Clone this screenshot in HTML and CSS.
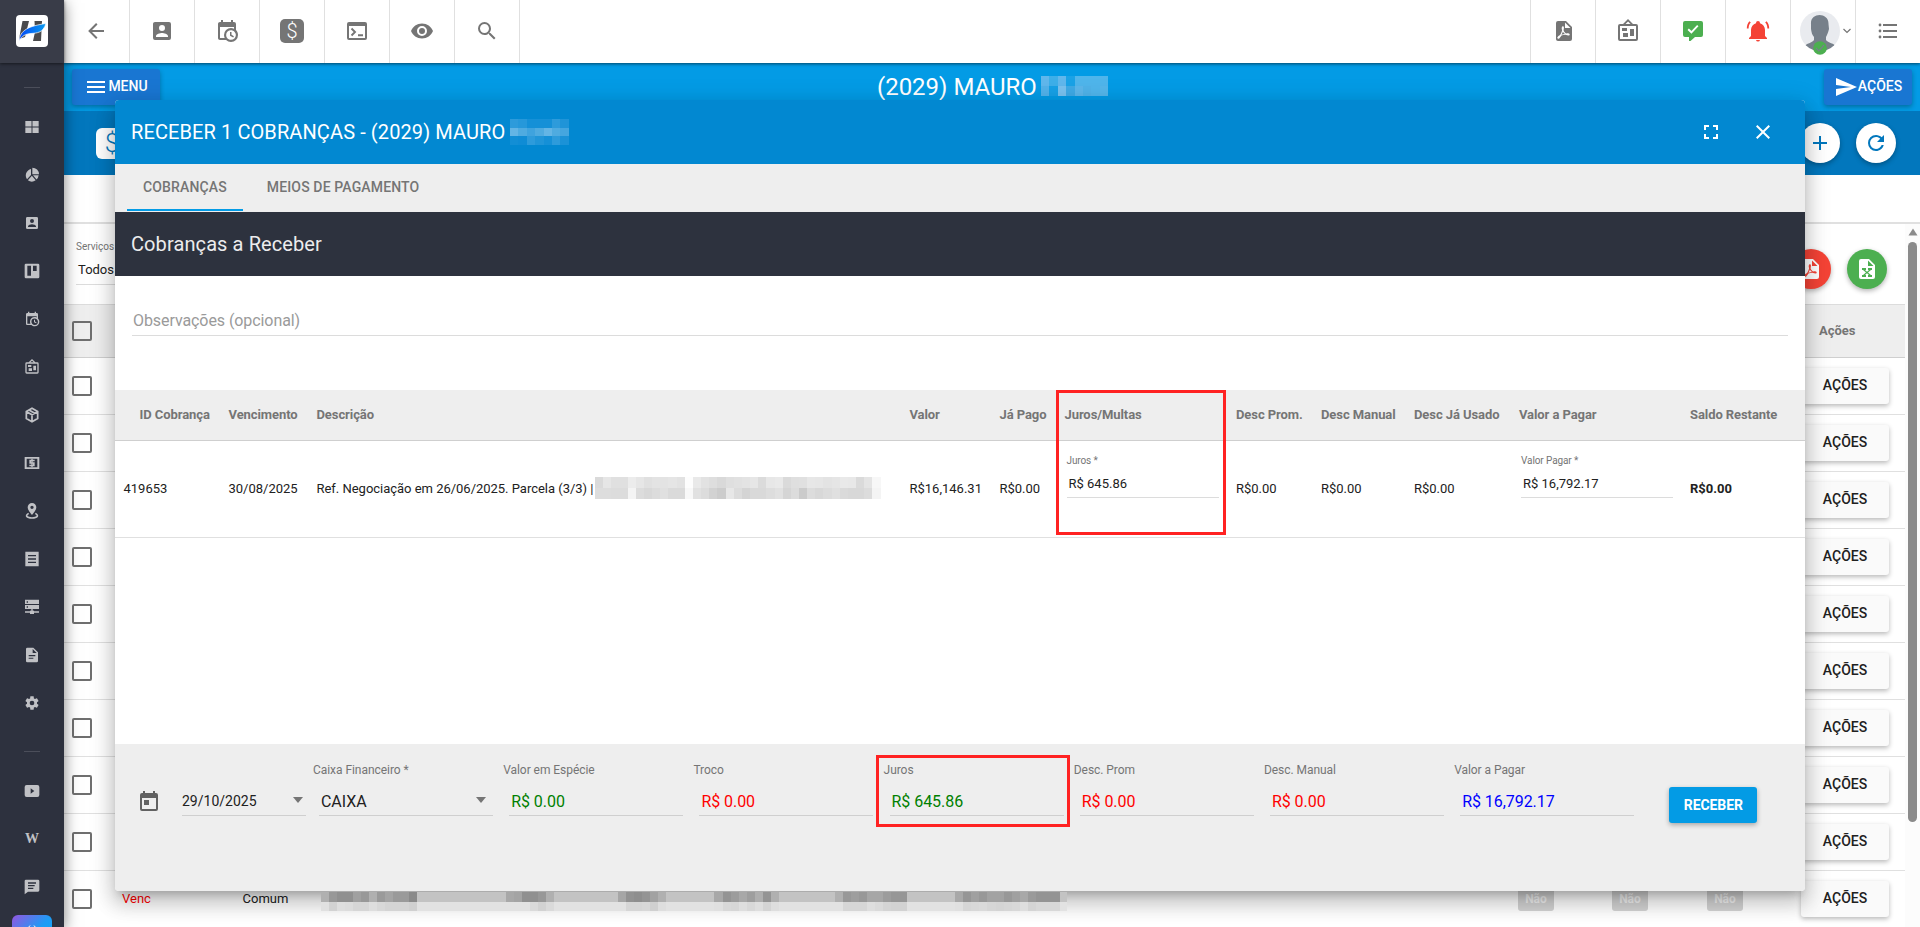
FILE: index.html
```html
<!DOCTYPE html>
<html lang="pt-BR">
<head>
<meta charset="utf-8">
<title>Receber cobranças</title>
<link rel="stylesheet" href="styles.css">
</head>
<body>
<svg class="defs" width="0" height="0">
  <symbol id="i-back" viewBox="0 0 24 24"><path d="M20,11V13H8L13.5,18.5L12.08,19.92L4.16,12L12.08,4.08L13.5,5.5L8,11H20Z"/></symbol>
  <symbol id="i-account" viewBox="0 0 24 24"><path fill-rule="evenodd" d="M6,17C6,15 10,13.9 12,13.9C14,13.9 18,15 18,17V18H6M15,9A3,3 0 0,1 12,12A3,3 0 0,1 9,9A3,3 0 0,1 12,6A3,3 0 0,1 15,9M3,5V19A2,2 0 0,0 5,21H19A2,2 0 0,0 21,19V5A2,2 0 0,0 19,3H5C3.89,3 3,3.9 3,5Z"/></symbol>
  <symbol id="i-calclock" viewBox="0 0 24 24"><path fill-rule="evenodd" d="M15,13H16.5V15.82L18.94,17.23L18.19,18.53L15,16.69V13M19,8H5V19H9.67C9.24,18.09 9,17.07 9,16A7,7 0 0,1 16,9C17.07,9 18.09,9.24 19,9.67V8M5,21C3.89,21 3,20.1 3,19V5C3,3.89 3.89,3 5,3H6V1H8V3H16V1H18V3H19A2,2 0 0,1 21,5V11.1C22.24,12.36 23,14.09 23,16A7,7 0 0,1 16,23C14.09,23 12.36,22.24 11.1,21H5M16,11.15A4.85,4.85 0 0,0 11.15,16C11.15,18.68 13.32,20.85 16,20.85A4.85,4.85 0 0,0 20.85,16C20.85,13.32 18.68,11.15 16,11.15Z"/></symbol>
  <symbol id="i-console" viewBox="0 0 24 24"><path fill-rule="evenodd" d="M4,3H20A2,2 0 0,1 22,5V19A2,2 0 0,1 20,21H4A2,2 0 0,1 2,19V5A2,2 0 0,1 4,3M4,7V19H20V7Z"/><path d="M6.5,9.5L10,13L6.5,16.500M13,16.200H18" fill="none" stroke="currentColor" stroke-width="1.900"/></symbol>
  <symbol id="i-eye" viewBox="0 0 24 24"><path fill-rule="evenodd" d="M12,9A3,3 0 0,0 9,12A3,3 0 0,0 12,15A3,3 0 0,0 15,12A3,3 0 0,0 12,9M12,17A5,5 0 0,1 7,12A5,5 0 0,1 12,7A5,5 0 0,1 17,12A5,5 0 0,1 12,17M12,4.5C7,4.500 2.730,7.610 1,12C2.730,16.390 7,19.500 12,19.500C17,19.500 21.270,16.390 23,12C21.270,7.610 17,4.500 12,4.500Z"/></symbol>
  <symbol id="i-search" viewBox="0 0 24 24"><path d="M9.5,3A6.5,6.5 0 0,1 16,9.5C16,11.11 15.41,12.59 14.44,13.73L14.71,14H15.5L20.5,19L19,20.5L14,15.5V14.71L13.73,14.44C12.59,15.41 11.11,16 9.5,16A6.5,6.5 0 0,1 3,9.5A6.5,6.5 0 0,1 9.5,3M9.5,5C7,5 5,7 5,9.5C5,12 7,14 9.5,14C12,14 14,12 14,9.5C14,7 12,5 9.5,5Z"/></symbol>
  <symbol id="i-pdf" viewBox="0 0 24 24"><path fill-rule="evenodd" d="M13,9H18.5L13,3.5V9M6,2H14L20,8V20A2,2 0 0,1 18,22H6C4.89,22 4,21.1 4,20V4A2,2 0 0,1 6,2M10.93,12.44C11.34,13.34 11.86,14.08 12.46,14.59L12.87,14.91C12,15.07 10.8,15.35 9.53,15.84L9.42,15.88L9.92,14.84C10.37,13.97 10.7,13.18 10.93,12.44M17.41,16.25C17.59,16.07 17.68,15.84 17.69,15.59C17.72,15.39 17.67,15.2 17.57,15.04C17.28,14.57 16.53,14.35 15.29,14.35L14,14.42L13.13,13.84C12.5,13.32 11.93,12.41 11.53,11.28L11.57,11.14C11.9,9.81 12.21,8.2 11.55,7.54C11.39,7.38 11.17,7.3 10.94,7.3H10.7C10.33,7.3 10,7.69 9.91,8.07C9.54,9.4 9.76,10.13 10.13,11.34C9.88,12.23 9.56,13.25 9.05,14.28L8.09,16.08L7.2,16.57C6,17.32 5.43,18.16 5.32,18.69C5.28,18.88 5.3,19.05 5.37,19.23L5.4,19.28L5.88,19.59L6.32,19.7C7.13,19.7 8.05,18.75 9.29,16.63L9.47,16.56C10.5,16.23 11.78,16 13.5,15.81C14.53,16.32 15.74,16.55 16.5,16.55C16.94,16.55 17.24,16.44 17.41,16.25Z"/></symbol>
  <symbol id="i-excel" viewBox="0 0 24 24"><path fill-rule="evenodd" d="M6,2H14L20,8V20A2,2 0 0,1 18,22H6A2,2 0 0,1 4,20V4A2,2 0 0,1 6,2M13,3.5V9H18.500ZM17,11H13V13H14L12,14.670L10,13H11V11H7V13H8L11,15.500L8,18H7V20H11V18H10L12,16.330L14,18H13V20H17V18H16L13,15.500L16,13H17Z"/></symbol>
  <symbol id="i-board" viewBox="0 0 24 24"><path fill-rule="evenodd" d="M12.04,2.5L9.53,5H14.53L12.04,2.5M4,7V20H20V7H4M12,0L17,5H20A2,2 0 0,1 22,7V20A2,2 0 0,1 20,22H4A2,2 0 0,1 2,20V7A2,2 0 0,1 4,5H7L12,0M7,18V14H12V18H7M14,17V10H18V17H14M6,12V9H11V12H6Z"/></symbol>
  <symbol id="i-msgcheck" viewBox="0 0 24 24"><path d="M4,2H20A2,2 0 0,1 22,4V16A2,2 0 0,1 20,18H14L9.500,22H8V18H4A2,2 0 0,1 2,16V4A2,2 0 0,1 4,2Z"/><path d="M7.200,10.200L10.400,13.300L16.800,6.700" fill="none" stroke="#fff" stroke-width="1.900"/></symbol>
  <symbol id="i-bell" viewBox="0 0 24 24"><path d="M21,19V20H3V19L5,17V11C5,7.9 7.03,5.17 10,4.29C10,4.19 10,4.1 10,4A2,2 0 0,1 12,2A2,2 0 0,1 14,4C14,4.1 14,4.19 14,4.29C16.97,5.17 19,7.9 19,11V17L21,19M14,21A2,2 0 0,1 12,22.500A2,2 0 0,1 10,21M20.5,2.200L19.200,3.600C20.900,5.200 21.300,7.500 21.400,9.500H23.200C23.200,6.500 22.400,4.200 20.500,2.200M.8,9.500H2.600C2.700,7.500 3.100,5.200 4.800,3.600L3.500,2.200C1.600,4.200 .8,6.500 .8,9.500Z"/></symbol>
  <symbol id="i-list" viewBox="0 0 24 24"><path d="M7,5H21V7H7ZM7,11H21V13H7ZM7,17H21V19H7Z"/><circle cx="4" cy="6" r="1.400"/><circle cx="4" cy="12" r="1.400"/><circle cx="4" cy="18" r="1.400"/></symbol>
  <symbol id="i-grid" viewBox="0 0 24 24"><path d="M2,3H11.300V11.400H2ZM12.700,3H22V11.400H12.700ZM2,12.600H11.300V21H2ZM12.700,12.600H22V21H12.700Z"/></symbol>
  <symbol id="i-pie" viewBox="0 0 24 24"><path d="M10.500,3V12L4.500,18.500A10,10 0 0,1 10.500,3ZM11.800,13L17.500,20A10,10 0 0,1 5.800,19.800ZM12.500,1A10,10 0 0,1 22.500,11H12.500ZM13.500,12.500H22A10,10 0 0,1 18.800,18.800Z"/></symbol>
  <symbol id="i-trello" viewBox="0 0 24 24"><path fill-rule="evenodd" d="M3,1H21A2,2 0 0,1 23,3V21A2,2 0 0,1 21,23H3A2,2 0 0,1 1,21V3A2,2 0 0,1 3,1M5,4V19H10.500V4ZM13.500,4V12H19V4Z"/></symbol>
  <symbol id="i-box" viewBox="0 0 24 24"><path d="M12,2L20.500,6.800V17.200L12,22L3.500,17.200V6.800ZM3.800,7L12,11.700L20.200,7M12,11.700V22M7.500,4.500L16,9.300" fill="none" stroke="currentColor" stroke-width="2.600"/></symbol>
  <symbol id="i-cash" viewBox="0 0 24 24"><path fill-rule="evenodd" d="M1,3H23V21H1ZM4,5.500V18.500H20V5.500ZM8,7H16V9.500H10.500V11H16V17H8V14.700H13.500V13H8Z"/><path d="M11,5.800H13V18.200H11Z"/></symbol>
  <symbol id="i-pin" viewBox="0 0 24 24"><path fill-rule="evenodd" d="M12,0A6.500,6.500 0 0,1 18.500,6.500C18.500,11 12,18 12,18C12,18 5.500,11 5.500,6.500A6.500,6.500 0 0,1 12,0M12,4A2.500,2.500 0 0,0 12,9A2.500,2.500 0 0,0 12,4"/><path d="M7,15.500C1,19 4,22.500 12,22.500C20,22.500 23,19 17,15.500" fill="none" stroke="currentColor" stroke-width="2.400"/></symbol>
  <symbol id="i-note" viewBox="0 0 24 24"><path fill-rule="evenodd" d="M2,1H22V23H2ZM6,6V8H18V6ZM6,11V13H18V11ZM6,16V18H18V16Z"/></symbol>
  <symbol id="i-server" viewBox="0 0 24 24"><path fill-rule="evenodd" d="M1.500,1H22.500V7.500H1.500ZM4,3.500V5.500H6V3.500ZM1.500,9H22.500V15H1.500ZM4,11V13H6V11ZM11,15H13V18.500H22.500V20.500H1.500V18.500H11Z"/><path d="M9,17.500H15V22.500H9Z"/></symbol>
  <symbol id="i-doc" viewBox="0 0 24 24"><path fill-rule="evenodd" d="M5,1H14L21,8V21A2,2 0 0,1 19,23H5A2,2 0 0,1 3,21V3A2,2 0 0,1 5,1M13,3V9H19ZM7,12V13.800H17V12ZM7,16V17.800H14V16Z"/></symbol>
  <symbol id="i-gear" viewBox="0 0 24 24"><path fill-rule="evenodd" d="M12,15.5A3.5,3.5 0 0,1 8.5,12A3.5,3.5 0 0,1 12,8.5A3.5,3.5 0 0,1 15.5,12A3.5,3.5 0 0,1 12,15.5M19.43,12.97C19.47,12.65 19.5,12.33 19.5,12C19.5,11.67 19.47,11.34 19.43,11L21.54,9.37C21.73,9.22 21.78,8.95 21.66,8.73L19.66,5.27C19.54,5.05 19.27,4.96 19.05,5.05L16.56,6.05C16.04,5.66 15.5,5.32 14.87,5.07L14.5,2.42C14.46,2.18 14.25,2 14,2H10C9.75,2 9.54,2.18 9.5,2.42L9.13,5.07C8.5,5.32 7.96,5.66 7.44,6.05L4.95,5.05C4.73,4.96 4.46,5.05 4.34,5.27L2.34,8.73C2.21,8.95 2.27,9.22 2.46,9.37L4.57,11C4.53,11.34 4.5,11.67 4.5,12C4.5,12.33 4.53,12.65 4.57,12.97L2.46,14.63C2.27,14.78 2.21,15.05 2.34,15.27L4.34,18.73C4.46,18.95 4.73,19.03 4.95,18.95L7.44,17.94C7.96,18.34 8.5,18.68 9.13,18.93L9.5,21.58C9.54,21.82 9.75,22 10,22H14C14.25,22 14.46,21.82 14.5,21.58L14.87,18.93C15.5,18.67 16.04,18.34 16.56,17.94L19.05,18.95C19.27,19.03 19.54,18.95 19.66,18.73L21.66,15.27C21.78,15.05 21.73,14.78 21.54,14.63L19.43,12.97Z"/></symbol>
  <symbol id="i-video" viewBox="0 0 24 24"><path fill-rule="evenodd" d="M4,3H20A3,3 0 0,1 23,6V18A3,3 0 0,1 20,21H4A3,3 0 0,1 1,18V6A3,3 0 0,1 4,3M10,8V16L15.500,12Z"/></symbol>
  <symbol id="i-chat" viewBox="0 0 24 24"><path fill-rule="evenodd" d="M3,1H21A2,2 0 0,1 23,3V17A2,2 0 0,1 21,19H6L1,23V3A2,2 0 0,1 3,1M6,5V7H18V5ZM6,9V11H16V9ZM6,13V15H14V13Z"/></symbol>
  <symbol id="i-refresh" viewBox="0 0 24 24"><path d="M17.65,6.35C16.2,4.9 14.21,4 12,4A8,8 0 0,0 4,12A8,8 0 0,0 12,20C15.73,20 18.84,17.45 19.73,14H17.65C16.83,16.33 14.61,18 12,18A6,6 0 0,1 6,12A6,6 0 0,1 12,6C13.66,6 15.14,6.69 16.22,7.78L13,11H20V4L17.65,6.35Z"/></symbol>
  <symbol id="i-plus" viewBox="0 0 24 24"><path d="M19,13H13V19H11V13H5V11H11V5H13V11H19V13Z"/></symbol>
  <symbol id="i-menu" viewBox="0 0 24 24"><path d="M3,6H21V8H3V6M3,11H21V13H3V11M3,16H21V18H3V16Z"/></symbol>
  <symbol id="i-send" viewBox="0 0 24 24"><path d="M2,21L23,12L2,3V10L17,12L2,14V21Z"/></symbol>
  <symbol id="i-full" viewBox="0 0 24 24"><path d="M5,5H10V7H7V10H5V5M14,5H19V10H17V7H14V5M17,14H19V19H14V17H17V14M10,17V19H5V14H7V17H10Z"/></symbol>
  <symbol id="i-close" viewBox="0 0 24 24"><path d="M19,6.41L17.59,5L12,10.59L6.41,5L5,6.41L10.59,12L5,17.59L6.41,19L12,13.41L17.59,19L19,17.59L13.41,12L19,6.41Z"/></symbol>
  <symbol id="i-today" viewBox="0 0 24 24"><path fill-rule="evenodd" d="M19,3H18V1H16V3H8V1H6V3H5A2,2 0 0,0 3,5V19A2,2 0 0,0 5,21H19A2,2 0 0,0 21,19V5A2,2 0 0,0 19,3M19,19H5V8H19ZM7,10H12V15H7Z"/></symbol>
</svg>

<div class="app">
  <aside class="sidebar">
    <div class="brand">
      <svg class="brand-mark" viewBox="0 0 32 32"><defs><linearGradient id="swoosh" x1="0" x2="1"><stop offset="0" stop-color="#0549f5"/><stop offset="1" stop-color="#089bef"/></linearGradient></defs>
        <rect width="32" height="32" rx="4" fill="#fff"/>
        <path d="M6.500,6H13L9,22L3,24ZM18.500,6H26L25,26H17L19,17Z" fill="#4a4a4c"/>
        <path d="M3,26C4,15 13,11 30,8.500C27,18 21,18 15,18.500C9,19 6,21 3,26Z" fill="url(#swoosh)" stroke="#fff" stroke-width=".7"/></svg>
    </div>
    <nav class="side-nav">
      <span class="side-sep"></span>
      <a class="side-item"><svg class="side-icon"><use href="#i-grid"/></svg></a>
      <a class="side-item"><svg class="side-icon"><use href="#i-pie"/></svg></a>
      <a class="side-item"><svg class="side-icon"><use href="#i-account"/></svg></a>
      <a class="side-item"><svg class="side-icon"><use href="#i-trello"/></svg></a>
      <a class="side-item"><svg class="side-icon"><use href="#i-calclock"/></svg></a>
      <a class="side-item"><svg class="side-icon"><use href="#i-board"/></svg></a>
      <a class="side-item"><svg class="side-icon"><use href="#i-box"/></svg></a>
      <a class="side-item"><svg class="side-icon"><use href="#i-cash"/></svg></a>
      <a class="side-item"><svg class="side-icon"><use href="#i-pin"/></svg></a>
      <a class="side-item"><svg class="side-icon"><use href="#i-note"/></svg></a>
      <a class="side-item"><svg class="side-icon"><use href="#i-server"/></svg></a>
      <a class="side-item"><svg class="side-icon"><use href="#i-doc"/></svg></a>
      <a class="side-item"><svg class="side-icon"><use href="#i-gear"/></svg></a>
      <span class="side-sep second"></span>
      <a class="side-item"><svg class="side-icon"><use href="#i-video"/></svg></a>
      <a class="side-item wiki">W</a>
      <a class="side-item"><svg class="side-icon"><use href="#i-chat"/></svg></a>
      <a class="side-cta"><svg width="12" height="12" viewBox="0 0 12 12"><path d="M2,4L4,1.500M8,1.500L10,4" stroke="#fff" stroke-width="1" fill="none"/></svg></a>
    </nav>
  </aside>

  <main class="main">
    <header class="toolbar">
      <a class="tool"><svg class="icon"><use href="#i-back"/></svg></a>
      <a class="tool"><svg class="icon"><use href="#i-account"/></svg></a>
      <a class="tool"><svg class="icon"><use href="#i-calclock"/></svg></a>
      <a class="tool"><span class="dollar">$</span></a>
      <a class="tool"><svg class="icon"><use href="#i-console"/></svg></a>
      <a class="tool"><svg class="icon"><use href="#i-eye"/></svg></a>
      <a class="tool"><svg class="icon"><use href="#i-search"/></svg></a>
      <span class="spacer"></span>
      <a class="tool right pdf"><svg class="icon"><use href="#i-pdf"/></svg></a>
      <a class="tool right"><svg class="icon"><use href="#i-board"/></svg></a>
      <a class="tool right green"><svg class="icon"><use href="#i-msgcheck"/></svg></a>
      <a class="tool right red"><svg class="icon"><use href="#i-bell"/></svg></a>
      <a class="tool right user">
        <svg class="avatar" viewBox="0 0 40 44"><defs><clipPath id="round"><circle cx="20" cy="20" r="20"/></clipPath></defs>
          <circle cx="20" cy="20" r="20" fill="#e9ebef"/>
          <g clip-path="url(#round)" fill="#77808a"><path d="M11,13C10,1 29,1 28.500,13L29,18C28,22 27,24 26,26V29C28,32 34,32 37,36V42H3V36C7,32 12,32 14,29V26C12,24 11.500,21 11,18Z"/></g>
          <circle cx="20" cy="37" r="6.800" fill="#4caf50"/><path d="M16,37L18.800,39.800L24,34" fill="none" stroke="#77808a" stroke-width="1.200"/></svg>
        <svg class="chev" viewBox="0 0 10 10"><path d="M1.500,3L5,6.500L8.500,3" fill="none" stroke="#757575" stroke-width="1.200"/></svg>
      </a>
      <a class="tool right last"><svg class="icon"><use href="#i-list"/></svg></a>
    </header>

    <div class="title-bar">
      <button class="bar-btn menu"><svg class="icon"><use href="#i-menu"/></svg><span>MENU</span></button>
      <h1 class="page-title">(2029) MAURO<span class="mosaic m-title" data-cell="8.400" data-h="10" data-rows="60b7ec,3dafe9,60b7ec,1aa2e6,4fb5eb,4fb5eb,4fb5eb,4fb5eb|52b2ea,16a0e6,78c1ee,3ea9e5,5cb6ea,4fb2e8,4fb5eb,54b6ea"></span></h1>
      <button class="bar-btn acts"><svg class="icon"><use href="#i-send"/></svg><span>AÇÕES</span></button>
    </div>
    <div class="sub-bar">
      <span class="dollar light">$</span>
      <span class="spacer"></span>
      <a class="fab"><svg class="icon"><use href="#i-plus"/></svg></a>
      <a class="fab"><svg class="icon"><use href="#i-refresh"/></svg></a>
    </div>
    <div class="tab-strip"></div>
    <div class="content">
      <div class="list">
        <div class="filters">
          <div class="filter"><span class="filter-label">Serviços</span><span class="filter-value">Todos</span></div>
          <span class="spacer"></span>
          <a class="fab solid-red"><svg class="icon"><use href="#i-pdf"/></svg></a>
          <a class="fab solid-green"><svg class="icon"><use href="#i-excel"/></svg></a>
        </div>
        <div class="row head"><span class="check"></span><span class="spacer"></span><b class="head-acts">Ações</b></div>
        <div class="row"><span class="check"></span><span class="spacer"></span><button class="row-btn">AÇÕES</button></div>
        <div class="row"><span class="check"></span><span class="spacer"></span><button class="row-btn">AÇÕES</button></div>
        <div class="row"><span class="check"></span><span class="spacer"></span><button class="row-btn">AÇÕES</button></div>
        <div class="row"><span class="check"></span><span class="spacer"></span><button class="row-btn">AÇÕES</button></div>
        <div class="row"><span class="check"></span><span class="spacer"></span><button class="row-btn">AÇÕES</button></div>
        <div class="row"><span class="check"></span><span class="spacer"></span><button class="row-btn">AÇÕES</button></div>
        <div class="row"><span class="check"></span><span class="spacer"></span><button class="row-btn">AÇÕES</button></div>
        <div class="row"><span class="check"></span><span class="spacer"></span><button class="row-btn">AÇÕES</button></div>
        <div class="row"><span class="check"></span><span class="spacer"></span><button class="row-btn">AÇÕES</button></div>
        <div class="row"><span class="check"></span><span class="venc">Venc</span><span class="comum">Comum</span>
          <span class="mosaic m-row" data-cell="8.030" data-h="9.500" data-rows="b0,98,90,90,a0,98,b0,9a,a4,9a,9a,8a,c3*11,a8,a4,90,90,98,b0,c3*8,a6,92,8e,94,a2,b0,c3*6,a8,94,9c,a8,9e,ae,94,b0,c3*7,b0,98,9e,98,a6,a6,9c,96,96,c3*6,a8,96,a0,98,a2,a2,98,a0,a8,9a,94,94,94,c3|e0,d2,de,dc,d6,d6,de,d8,d4,d4,d4,d0,e2*14,da,d2,da,e2*8,e2,d6,d6,d8,d0,de,e2*6,e0,d8,d6,de,d8,de,d4,de,e2*7,e2,d6,d6,d6,de,da,d4,d2,d2,e2*6,e0,d6,d8,da,d6,d4,d6,d8,de,d4,d8,d8,d8,e2"></span>
          <span class="spacer"></span>
          <span class="badge b1">Não</span><span class="badge b2">Não</span><span class="badge b3">Não</span><button class="row-btn">AÇÕES</button></div>
      </div>
      <div class="scroll"><svg class="scroll-up" viewBox="0 0 10 8"><path d="M5,.5L9.500,7.500H.5Z" fill="#8b8b8b"/></svg><span class="thumb"></span></div>
    </div>
  </main>
</div>

<section class="dialog">
  <header class="dialog-head"><h2>RECEBER 1 COBRANÇAS - (2029) MAURO</h2><span class="mosaic m-dialog" data-cell="8.400" data-h="8.700" data-rows="2d9bdb,2698da,1590d7,1590d7,1590d7,2d9bdb,1f94d8|64b5e5,4fabe0,3fa3de,4fabe0,64b5e5,4fabe0,45a6df|128ed5,0f8cd5,2d9bdb,2095d8,1590d7,2d9bdb,1b92d7"></span>
    <span class="spacer"></span><svg class="icon head-icon"><use href="#i-full"/></svg><svg class="icon head-icon"><use href="#i-close"/></svg></header>
  <div class="tabs"><span class="tab active">COBRANÇAS</span><span class="tab">MEIOS DE PAGAMENTO</span></div>
  <h3 class="section-head">Cobranças a Receber</h3>
  <div class="obs"><div class="obs-input">Observações (opcional)</div></div>
  <div class="charges">
    <div class="charge head-row">
      <span class="id">ID Cobrança</span><span>Vencimento</span><span>Descrição</span><span>Valor</span><span>Já Pago</span><span>Juros/Multas</span><span>Desc Prom.</span><span>Desc Manual</span><span>Desc Já Usado</span><span>Valor a Pagar</span><span>Saldo Restante</span>
    </div>
    <div class="charge body-row">
      <span>419653</span><span>30/08/2025</span>
      <span class="desc">Ref. Negociação em 26/06/2025. Parcela (3/3) | T<i class="mosaic m-desc" data-cell="8.160" data-h="11" data-rows="da,e6,e0,e0,ec,e6,e0,e3,e3,e5,e2,fd,e9,e2,de,d9,df,e1,e3,e6,db,e7,e9,da,df,e0,e7,e6,e3,e5,e9,e8,da,e4,f7|dd,dd,dc,dc,f4,dc,d8,dc,e0,da,da,f8,e1,dc,d2,cc,e7,dc,d4,d9,d9,dd,e1,d5,dc,cb,dc,d8,dc,e0,da,d8,d8,dc,f4"></i></span>
      <span>R$16,146.31</span><span>R$0.00</span>
      <span class="field interest"><small>Juros *</small><em>R$ 645.86</em></span>
      <span>R$0.00</span><span>R$0.00</span><span>R$0.00</span>
      <span class="field"><small>Valor Pagar *</small><em>R$ 16,792.17</em></span>
      <b>R$0.00</b>
    </div>
  </div>
  <footer class="dialog-foot">
    <svg class="icon today"><use href="#i-today"/></svg>
    <div class="date">29/10/2025<i class="caret"></i></div>
    <div class="total"><label>Caixa Financeiro *</label><div class="total-value select">CAIXA<i class="caret"></i></div></div>
    <div class="total"><label>Valor em Espécie</label><div class="total-value pos">R$ 0.00</div></div>
    <div class="total"><label>Troco</label><div class="total-value neg">R$ 0.00</div></div>
    <div class="total"><label>Juros</label><div class="total-value pos">R$ 645.86</div></div>
    <div class="total"><label>Desc. Prom</label><div class="total-value neg">R$ 0.00</div></div>
    <div class="total"><label>Desc. Manual</label><div class="total-value neg">R$ 0.00</div></div>
    <div class="total"><label>Valor a Pagar</label><div class="total-value due">R$ 16,792.17</div></div>
    <button class="receive">RECEBER</button>
  </footer>
  <span class="mark mark-column"></span>
  <span class="mark mark-total"></span>
</section>
<script src="mosaic.js"></script>
</body>
</html>
```

FILE: mosaic.js
```js
// Fills each redaction block with its grid of flat cells.
// A value is rr (grey) or rrggbb, optionally followed by *count.
document.querySelectorAll('.mosaic').forEach(function (el) {
  var w = parseFloat(el.dataset.cell), h = parseFloat(el.dataset.h);
  var rows = el.dataset.rows.split('|').map(function (r) {
    var out = [];
    r.split(',').forEach(function (t) {
      var p = t.split('*'), c = p[0].length === 2 ? p[0] + p[0] + p[0] : p[0];
      for (var i = 0; i < (+p[1] || 1); i++) out.push(c);
    });
    return out;
  });
  var n = rows[0].length, s = '';
  rows.forEach(function (r, y) {
    r.slice(0, n).forEach(function (c, x) {
      s += '<rect x="' + x * w + '" y="' + y * h + '" width="' + w + '" height="' + h + '" fill="#' + c + '"/>';
    });
  });
  el.innerHTML = '<svg shape-rendering="crispEdges" width="' + n * w + '" height="' + rows.length * h + '">' + s + '</svg>';
});
```

FILE: styles.css
```css
* { box-sizing: border-box; }
body { margin: 0; font-family: Roboto, "Liberation Sans", sans-serif; font-size: 13px; color: #212121; background: #fff; height: 927px; overflow: hidden; }
h1, h2, h3 { margin: 0; font-weight: 400; }
button { border: 0; font-family: inherit; padding: 0; }
.defs { position: absolute; }
.spacer { flex: 1; }
.icon { width: 24px; height: 24px; fill: currentColor; flex: none; }
.mosaic svg { display: block; }

.app { display: flex; height: 927px; }
.sidebar { width: 64px; flex: none; background: #2d313e; z-index: 5; box-shadow: 0 3px 14px rgba(0,0,0,.5); display: flex; flex-direction: column; overflow: clip; overflow-clip-margin: 20px; }
.brand { height: 63px; flex: none; background: #393c48; display: flex; align-items: center; justify-content: center; box-shadow: 0 1px 3px rgba(0,0,0,.5); padding-bottom: 1px; }
.brand-mark { width: 32px; height: 32px; }
.side-nav { display: flex; flex-direction: column; align-items: center; padding-top: 24px; height: 864px; overflow: hidden; }
.side-sep { width: 16px; height: 1px; flex: none; background: #4b4e5a; margin-bottom: 15px; }
.side-sep.second { margin: 24px 0 15px; }
.side-item { height: 48px; flex: none; display: flex; align-items: center; justify-content: center; color: #c0c1c5; }
.side-icon { width: 16px; height: 16px; fill: currentColor; }
.wiki { font: 700 14px "Liberation Serif", serif; }
.side-cta { width: 40px; height: 40px; flex: none; margin-top: 4px; border-radius: 6px; background: linear-gradient(135deg, #9455e0, #1e9bf5 50%, #08aef5); display: flex; justify-content: center; padding-top: 9px; }

.main { flex: 1; min-width: 0; display: flex; flex-direction: column; }
.toolbar { height: 63px; flex: none; display: flex; background: #fff; z-index: 3; box-shadow: 0 1px 3px rgba(0,0,0,.55); }
.tool { width: 65px; display: flex; align-items: center; justify-content: center; color: #757575; border-right: 1px solid #e0e0e0; padding-bottom: 1px; }
.tool:first-child { width: 66px; padding-right: 1px; }
.tool.right { border-right: 0; border-left: 1px solid #e0e0e0; }
.tool.pdf { padding-left: 2px; }
.tool.green { color: #4caf50; }
.tool.red { color: #f44336; padding-right: 1px; }
.tool.user { gap: 2px; padding-left: 6px; }
.avatar { width: 40px; height: 44px; margin-top: 3px; flex: none; }
.chev { width: 10px; height: 10px; flex: none; }
.dollar { width: 24px; height: 24px; border-radius: 5px; background: #757575; color: #fff; font-size: 20px; font-weight: 300; line-height: 24px; text-align: center; }
.dollar.light { width: 32px; height: 31px; border-radius: 6px; background: #fff; color: #0277bd; font-size: 26px; line-height: 31px; margin-left: 32px; }

.title-bar { height: 48px; flex: none; background: #039be5; color: #fff; display: flex; align-items: center; justify-content: space-between; padding: 0 8px; }
.bar-btn { width: 88px; height: 36px; border-radius: 3px; background: #1976d2; color: #fff; font-size: 14px; font-weight: 500; display: flex; align-items: center; justify-content: center; box-shadow: 0 2px 5px rgba(0,0,0,.3); }
.bar-btn span { padding-bottom: 2px; }
.page-title { font-size: 24px; display: flex; align-items: center; gap: 4px; padding-left: 1px; }
.m-title { margin-top: -2px; }
.sub-bar { height: 64px; flex: none; background: #0277bd; display: flex; align-items: center; gap: 16px; padding-right: 24px; }
.fab { width: 40px; height: 40px; border-radius: 50%; background: #fff; color: #0277bd; display: flex; align-items: center; justify-content: center; box-shadow: 0 2px 5px rgba(0,0,0,.3); }
.fab.solid-red { background: #f44336; color: #fff; }
.fab.solid-green { background: #4caf50; color: #fff; }
.tab-strip { height: 49px; flex: none; border-bottom: 2px solid #e0e0e0; }
.content { flex: 1; min-height: 0; display: flex; overflow: hidden; }
.list { flex: 1; min-width: 0; }
.filters { height: 80px; display: flex; align-items: center; gap: 16px; padding: 10px 18px 0 12px; }
.filter { display: flex; flex-direction: column; gap: 9px; width: 150px; border-bottom: 1px solid #dcdcdc; height: 44px; margin-top: -12px; }
.filter-label { font-size: 10px; color: #757575; line-height: 12px; }
.filter-value { font-size: 13px; line-height: 15px; padding-left: 2px; }
.row { height: 57px; display: flex; align-items: center; border-bottom: 1px solid #e0e0e0; padding: 0 16px 0 8px; }
.row.head { height: 54px; background: #eee; border-top: 1px solid #dcdcdc; border-bottom-color: #cfcfcf; }
.head-acts { width: 86px; margin-right: -16px; color: #757575; padding-bottom: 2px; }
.check { width: 20px; height: 20px; border: 2px solid #6f6f6f; border-radius: 2px; }
.row-btn { width: 88px; height: 36px; border-radius: 3px; background: #fafafa; color: #212121; font-size: 14px; font-weight: 500; padding-bottom: 2px; box-shadow: 0 2px 5px rgba(0,0,0,.28); }
.venc { color: #f00; margin-left: 30px; width: 120.500px; padding-bottom: 2px; }
.comum { width: 78px; padding-bottom: 2px; }
.m-row { position: relative; z-index: 12; margin-top: 4px; }
.badge { width: 36px; height: 24px; border-radius: 3px; background: #d4d4d4; color: #f2f2f2; font-size: 12px; font-weight: 700; line-height: 24px; text-align: center; }
.b1 { margin-right: 58px; }
.b2 { margin-right: 59px; }
.b3 { margin-right: 58px; }
.scroll { width: 15px; display: flex; flex-direction: column; align-items: center; background: #fcfcfc; padding-top: 4px; gap: 6px; }
.scroll-up { width: 10px; height: 8px; }
.thumb { width: 9px; height: 580px; border-radius: 5px; background: #8b8b8b; }

.dialog { position: absolute; left: 115px; top: 100px; width: 1690px; height: 791px; z-index: 10; border-radius: 4px; background: #fff; display: flex; flex-direction: column; box-shadow: 0 7px 8px -4px rgba(0,0,0,.2), 0 13px 19px 2px rgba(0,0,0,.14), 0 5px 24px 4px rgba(0,0,0,.12); }
.dialog-head { height: 64px; flex: none; background: #0288d1; color: #fff; border-radius: 4px 4px 0 0; display: flex; align-items: center; padding: 0 30px 0 16px; }
.dialog-head h2 { font-size: 20px; letter-spacing: .1px; margin-right: 5px; }
.head-icon { margin-left: 28px; }
.tabs { height: 48px; flex: none; background: #eee; display: flex; padding-left: 12px; }
.tab { padding: 0 16px; height: 47px; line-height: 47px; font-size: 14px; font-weight: 500; letter-spacing: .14px; color: #757575; margin-right: 8px; }
.tab.active { border-bottom: 2px solid #039be5; }
.section-head { height: 64px; flex: none; background: #2d323e; color: #ececed; font-size: 20px; letter-spacing: .1px; line-height: 64px; padding-left: 16px; }
.obs { height: 114px; flex: none; padding: 30px 17px 0; }
.obs-input { height: 30px; line-height: 30px; border-bottom: 1px solid #dcdcdc; font-size: 16px; letter-spacing: -.08px; color: #9a9a9a; padding-left: 1px; }
.charge { display: grid; grid-template-columns: 105px 88px 593px 90px 65px 171.500px 85px 93px 105px 171px 1fr; padding: 0 0 2px 8.500px; align-items: center; white-space: nowrap; }
.head-row { height: 51px; background: #eee; border-bottom: 1px solid #cfcfcf; font-weight: 700; color: #757575; letter-spacing: -.08px; }
.head-row .id { padding-left: 16px; }
.body-row { height: 97px; border-bottom: 1px solid #e0e0e0; }
.desc { display: flex; align-items: center; letter-spacing: -.02px; }
.m-desc { margin-left: -9px; z-index: 1; }
.field { display: flex; flex-direction: column; width: 154px; padding-left: 2px; margin-top: -24px; }
.field small { font-size: 10px; line-height: 12px; color: #757575; margin-bottom: 8px; letter-spacing: -.1px; }
.field em { font-style: normal; line-height: 18px; height: 23px; padding-left: 2px; border-bottom: 1px solid #dcdcdc; }
.dialog-foot { margin-top: auto; height: 147px; flex: none; background: #eee; border-radius: 0 0 4px 4px; display: flex; padding-left: 22px; padding-top: 19px; }
.today { color: #616161; margin-top: 27px; }
.date { width: 124px; height: 34px; margin: 19px 7px 0 21px; border-bottom: 1px solid #cfcfcf; font-size: 14px; line-height: 37px; display: flex; align-items: center; justify-content: space-between; padding: 5px 3px 0 0; }
.caret { width: 0; height: 0; border: 5px solid transparent; border-top: 6px solid #757575; border-bottom: 0; margin-top: -3px; }
.total { width: 190.200px; }
.total label { display: block; font-size: 12px; line-height: 14px; color: #757575; letter-spacing: -.05px; }
.total-value { margin: 5px 0 0 6px; width: 174px; height: 34px; border-bottom: 1px solid #cfcfcf; font-size: 16px; line-height: 39px; padding-left: 2px; letter-spacing: -.05px; }
.select { display: flex; justify-content: space-between; align-items: center; padding: 5px 7px 0 2px; }
.pos { color: #008000; }
.neg { color: #f00; }
.due { color: #00f; }
.receive { width: 88px; height: 36px; margin: 24px 0 0 25px; border-radius: 3px; background: #039be5; color: #fff; font-size: 14px; font-weight: 700; padding-bottom: 1px; letter-spacing: -.08px; box-shadow: 0 2px 5px rgba(0,0,0,.3); }
.mark { position: absolute; border: 3px solid #ff2222; }
.mark-column { left: 941px; top: 290px; width: 170px; height: 145px; }
.mark-total { left: 761px; top: 655px; width: 194px; height: 72px; }
```
